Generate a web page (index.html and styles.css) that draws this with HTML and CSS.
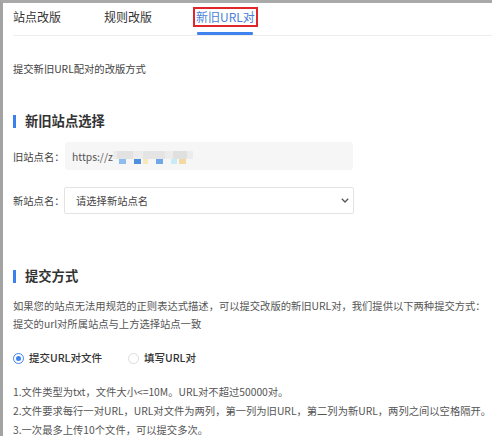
FILE: index.html
```html
<!DOCTYPE html>
<html lang="zh-CN">
<head>
<meta charset="utf-8">
<title>新旧URL对</title>
<link rel="stylesheet" href="styles.css">
</head>
<body>
<div class="frame">
  <div class="tabs">
    <div class="tab">站点改版</div>
    <div class="tab">规则改版</div>
    <div class="tab active"><span class="tab-label">新旧URL对</span></div>
  </div>

  <p class="desc">提交新旧URL配对的改版方式</p>

  <h2 class="heading">新旧站点选择</h2>

  <div class="row">
    <span class="label">旧站点名：</span>
    <div class="input">
      <span class="input-text">https://z</span>
      <svg class="blur" width="80" height="14" viewBox="0 0 80 14">
        <rect x="0" y="0" width="80" height="8" fill="#ececec"/>
        <rect x="4" y="0" width="16" height="8" fill="#e2e2e2"/>
        <rect x="30" y="0" width="22" height="8" fill="#e4e4e4"/>
        <rect x="60" y="0" width="14" height="8" fill="#e0e0e0"/>
        <rect x="6" y="8" width="7" height="5" fill="#8dbdf0"/>
        <rect x="21" y="8" width="7" height="5" fill="#4f8fe0"/>
        <rect x="30" y="8" width="5" height="5" fill="#f6e8b8"/>
        <rect x="43" y="8" width="7" height="5" fill="#6fa8ea"/>
        <rect x="58" y="8" width="6" height="5" fill="#c8ecf6"/>
        <rect x="66" y="8" width="7" height="5" fill="#f4d9a0"/>
      </svg>
    </div>
  </div>

  <div class="row row-select">
    <span class="label">新站点名：</span>
    <div class="select">
      <span class="select-text">请选择新站点名</span>
      <svg class="chevron" width="8" height="5" viewBox="0 0 8 5">
        <polyline points="0.8,0.8 4,4 7.2,0.8" fill="none" stroke="#555" stroke-width="1.3"/>
      </svg>
    </div>
  </div>

  <h2 class="heading heading-2">提交方式</h2>

  <p class="para">如果您的站点无法用规范的正则表达式描述，可以提交改版的新旧URL对，我们提供以下两种提交方式：<br>提交的url对所属站点与上方选择站点一致</p>

  <div class="radios">
    <label class="radio"><span class="dot checked"></span>提交URL对文件</label>
    <label class="radio"><span class="dot"></span>填写URL对</label>
  </div>

  <ol class="rules">
    <li>1.文件类型为txt，文件大小&lt;=10M。URL对不超过50000对。</li>
    <li>2.文件要求每行一对URL，URL对文件为两列，第一列为旧URL，第二列为新URL，两列之间以空格隔开。</li>
    <li>3.一次最多上传10个文件，可以提交多次。</li>
  </ol>
</div>
</body>
</html>
```

FILE: styles.css
```css
* { box-sizing: border-box; }

html, body {
  margin: 0;
  padding: 0;
  background: #ffffff;
}

body {
  font-family: "Noto Sans CJK SC", "Noto Sans", sans-serif;
  color: #333;
}

.frame {
  width: 492px;
  height: 436px;
  border-top: 3px solid #a9a9a9;
  border-left: 3px solid #a3a3a3;
  background: #fff;
  overflow: hidden;
}

/* Tabs */
.tabs {
  display: flex;
  align-items: flex-start;
  gap: 43px;
  height: 33px;
  margin: 0 0 0 10px;
  border-bottom: 1px solid #eeeeee;
}

.tab {
  font-size: 12px;
  line-height: 16px;
  padding-top: 6px;
  color: #333;
  white-space: nowrap;
}

.tab.active {
  padding-top: 4px;
  margin-left: -2px;
  color: #4a7fd9;
  display: flex;
  flex-direction: column;
  align-items: center;
}

.tab-label {
  display: block;
  border: 2px solid #e0262b;
  padding: 0 1px;
}

.tab.active::after {
  content: "";
  display: block;
  width: 56px;
  height: 3px;
  margin-top: 5px;
  background: #3f83ee;
  border-radius: 1px;
}

/* Description */
.desc {
  margin: 25px 0 0 10px;
  font-size: 10.3px;
  line-height: 16px;
  color: #444;
}

/* Headings */
.heading {
  display: flex;
  align-items: center;
  gap: 9px;
  margin: 35px 0 0 10px;
  font-size: 13.3px;
  line-height: 18px;
  font-weight: bold;
  color: #333;
}

.heading::before {
  content: "";
  display: block;
  width: 3px;
  height: 13px;
  background: #3c7ff0;
}

.heading-2 {
  margin-top: 53px;
}

/* Form rows */
.row {
  display: flex;
  align-items: center;
  margin: 12px 0 0 10px;
}

.row-select {
  margin-top: 17px;
}

.label {
  width: 52px;
  font-size: 10.3px;
  color: #444;
  white-space: nowrap;
}

.input {
  display: flex;
  align-items: center;
  width: 288px;
  height: 28px;
  padding-left: 7px;
  background: #f6f6f6;
  border-radius: 3px;
}

.input-text {
  font-size: 10.3px;
  color: #555;
}

.blur {
  display: block;
  margin-top: 3px;
}

.select {
  display: flex;
  align-items: center;
  justify-content: space-between;
  width: 290px;
  height: 27px;
  margin-left: -1px;
  padding: 0 4px 0 11px;
  border: 1px solid #e3e3e3;
  border-radius: 2px;
  background: #fff;
}

.select-text {
  font-size: 10.3px;
  color: #444;
}

.chevron {
  display: block;
}

/* Paragraph */
.para {
  margin: 12px 0 0 10px;
  font-size: 10.3px;
  line-height: 18px;
  color: #555;
  white-space: nowrap;
}

/* Radios */
.radios {
  display: flex;
  align-items: center;
  gap: 26px;
  margin: 17px 0 0 10px;
  height: 16px;
}

.radio {
  display: flex;
  align-items: center;
  gap: 5px;
  font-size: 10.5px;
  line-height: 16px;
  font-weight: 500;
  color: #333;
}

.dot {
  display: block;
  width: 11px;
  height: 11px;
  border: 1px solid #dcdcdc;
  border-radius: 50%;
  background: #fff;
  position: relative;
}

.dot.checked {
  border-color: #3f83ee;
}

.dot.checked::after {
  content: "";
  position: absolute;
  left: 2px;
  top: 2px;
  width: 5px;
  height: 5px;
  border-radius: 50%;
  background: #3f83ee;
}

/* Rules */
.rules {
  list-style: none;
  margin: 16px 0 0 10px;
  padding: 0;
  font-size: 10.3px;
  line-height: 19px;
  color: #555;
  white-space: nowrap;
}
```
